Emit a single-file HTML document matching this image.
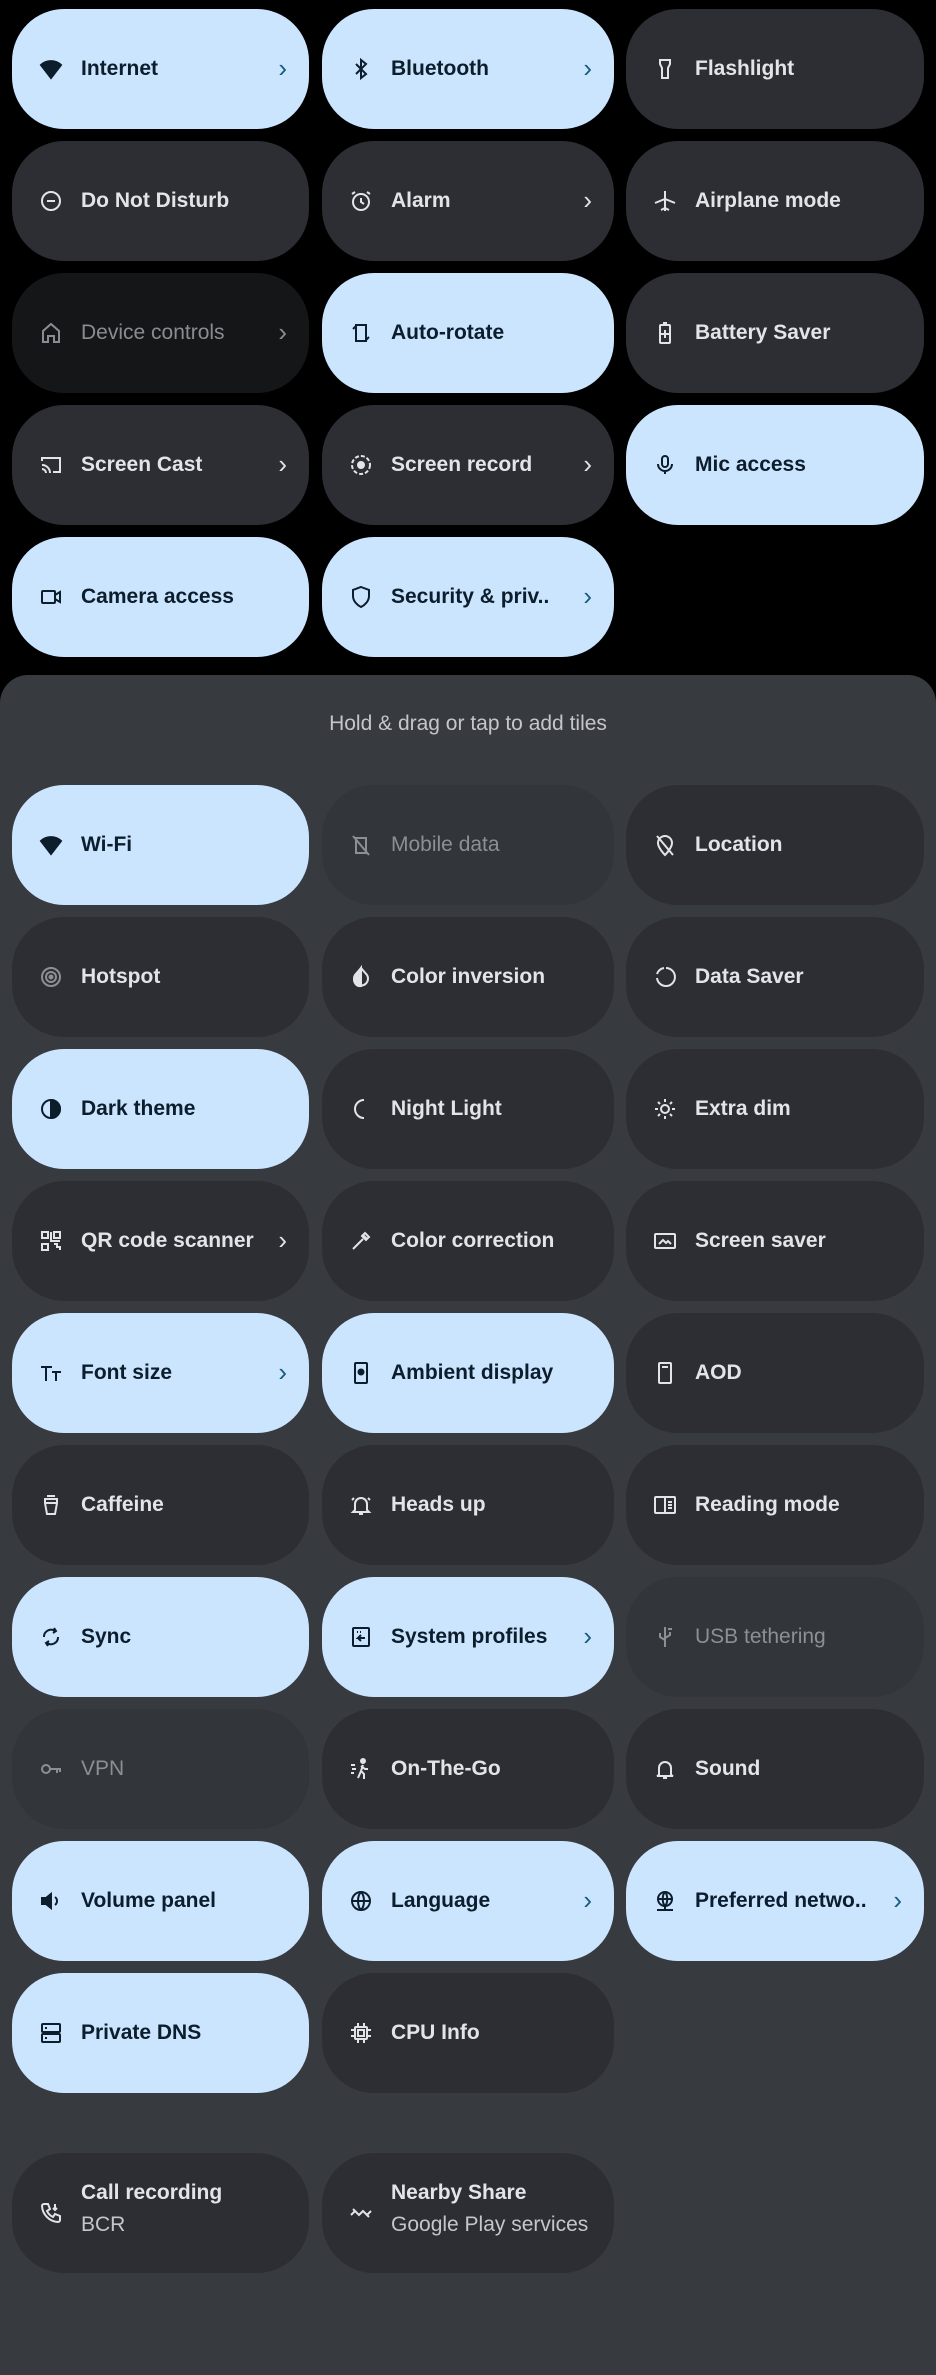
<!DOCTYPE html>
<html><head><meta charset="utf-8"><style>
*{margin:0;padding:0;box-sizing:border-box}
body{width:936px;height:2320px;background:#000;position:relative;overflow:hidden;font-family:"Liberation Sans",sans-serif}
.panel{position:absolute;left:0;top:675px;width:936px;height:1700px;background:#373a3f;border-radius:28px 28px 0 0}
.hint{position:absolute;top:712px;left:0;width:936px;text-align:center;color:#c4c6cb;font-size:21px}
.t{position:absolute;height:120px;border-radius:52px;background:#2c2e33;color:#e4e4e8;font-size:21px;font-weight:bold;display:flex;align-items:center}
.t.on{background:#cce5ff;color:#0c1d2c}
.t.na{background:#323539;color:#8c8f94;font-weight:normal}
.t.dim{background:#151618;color:#8a8c90;font-weight:normal}
.t svg{position:absolute;left:27px;top:48px;width:24px;height:24px;fill:none;stroke:currentColor;stroke-width:2}
.t .l{position:absolute;left:69px;white-space:nowrap}
.t .c{position:absolute;right:22px;top:44px;font-size:26px;font-weight:normal}
.t.on .c{color:#1a5a80}
.c1{left:12px;width:297px}.c2{left:322px;width:292px}.c3{left:626px;width:298px}
.sub{display:block;font-weight:normal;color:#c4c6cb;margin-top:8px}
</style></head><body>
<div class="t on c1" style="top:9px"><svg><path d="M2 8a15 15 0 0 1 20 0L12 21z" fill="currentColor"/></svg><span class="l">Internet</span><span class="c">›</span></div>
<div class="t on c2" style="top:9px"><svg><path d="M7 7l10 10-5 4V3l5 4L7 17"/></svg><span class="l">Bluetooth</span><span class="c">›</span></div>
<div class="t c3" style="top:9px"><svg><path d="M7 3h10v4l-2 4v10H9V11L7 7z"/></svg><span class="l">Flashlight</span></div>

<div class="t c1" style="top:141px"><svg><circle cx="12" cy="12" r="9"/><path d="M8 12h8"/></svg><span class="l">Do Not Disturb</span></div>
<div class="t c2" style="top:141px"><svg><circle cx="12" cy="13" r="8"/><path d="M12 9v4l3 2M3 5l3-2M21 5l-3-2"/></svg><span class="l">Alarm</span><span class="c">›</span></div>
<div class="t c3" style="top:141px"><svg><path d="M12 2v20M2 14l10-4 10 4M8 21l4-2 4 2" /></svg><span class="l">Airplane mode</span></div>

<div class="t dim c1" style="top:273px"><svg><path d="M4 21V10l8-7 8 7v11h-5v-6H9v6z"/></svg><span class="l">Device controls</span><span class="c">›</span></div>
<div class="t on c2" style="top:273px"><svg><rect x="7" y="4" width="10" height="16"/><path d="M4 8l3-3M20 16l-3 3"/></svg><span class="l">Auto-rotate</span></div>
<div class="t c3" style="top:273px"><svg><rect x="7" y="4" width="10" height="18" rx="1"/><path d="M10 2h4M12 9v8M8 13h8"/></svg><span class="l">Battery Saver</span></div>

<div class="t c1" style="top:405px"><svg><path d="M3 8V5h18v14h-7M3 12a8 8 0 0 1 8 8M3 16a4 4 0 0 1 4 4"/></svg><span class="l">Screen Cast</span><span class="c">›</span></div>
<div class="t c2" style="top:405px"><svg><circle cx="12" cy="12" r="9" stroke-dasharray="4 2"/><circle cx="12" cy="12" r="3" fill="currentColor"/></svg><span class="l">Screen record</span><span class="c">›</span></div>
<div class="t on c3" style="top:405px"><svg><rect x="9" y="3" width="6" height="11" rx="3"/><path d="M5 11a7 7 0 0 0 14 0M12 18v3"/></svg><span class="l">Mic access</span></div>

<div class="t on c1" style="top:537px"><svg><rect x="3" y="6" width="13" height="12" rx="1"/><path d="M16 10l5-3v10l-5-3"/></svg><span class="l">Camera access</span></div>
<div class="t on c2" style="top:537px"><svg><path d="M12 2l8 3v6c0 5-4 9-8 11-4-2-8-6-8-11V5z"/></svg><span class="l">Security &amp; priv..</span><span class="c">›</span></div>

<div class="panel"></div>
<div class="hint">Hold &amp; drag or tap to add tiles</div>

<div class="t on c1" style="top:785px"><svg><path d="M2 8a15 15 0 0 1 20 0L12 21z" fill="currentColor"/></svg><span class="l">Wi-Fi</span></div>
<div class="t na c2" style="top:785px"><svg><path d="M7 5h10v15H7zM4 3l16 19"/></svg><span class="l">Mobile data</span></div>
<div class="t c3" style="top:785px"><svg><path d="M12 22s7-7 7-12a7 7 0 0 0-14 0c0 5 7 12 7 12zM4 3l16 19"/></svg><span class="l">Location</span></div>

<div class="t c1" style="top:917px"><svg style="color:#8c8f94"><circle cx="12" cy="12" r="9"/><circle cx="12" cy="12" r="5"/><circle cx="12" cy="12" r="1.5" fill="currentColor"/></svg><span class="l">Hotspot</span></div>
<div class="t c2" style="top:917px"><svg><path d="M12 3l6 7a7 7 0 1 1-12 0z"/><path d="M12 3v18a6 6 0 0 1-6-9z" fill="currentColor"/></svg><span class="l">Color inversion</span></div>
<div class="t c3" style="top:917px"><svg><path d="M13 3a9 9 0 1 1-9 10M11 3a9 9 0 0 0-7 6"/></svg><span class="l">Data Saver</span></div>

<div class="t on c1" style="top:1049px"><svg><circle cx="12" cy="12" r="9"/><path d="M12 3a9 9 0 0 1 0 18z" fill="currentColor"/></svg><span class="l">Dark theme</span></div>
<div class="t c2" style="top:1049px"><svg><path d="M15 3a9 9 0 1 0 0 18 9 9 0 0 1 0-18z"/></svg><span class="l">Night Light</span></div>
<div class="t c3" style="top:1049px"><svg><circle cx="12" cy="12" r="4"/><path d="M12 2v3M12 19v3M2 12h3M19 12h3M5 5l2 2M17 17l2 2M5 19l2-2M17 7l2-2"/></svg><span class="l">Extra dim</span></div>

<div class="t c1" style="top:1181px"><svg><path d="M3 3h6v6H3zM15 3h6v6h-6zM3 15h6v6H3zM15 15h3v3h3v3M12 3v9h9"/></svg><span class="l">QR code scanner</span><span class="c">›</span></div>
<div class="t c2" style="top:1181px"><svg><path d="M4 20l10-10M14 6l4 4M16 4l4 4-3 3-4-4z"/></svg><span class="l">Color correction</span></div>
<div class="t c3" style="top:1181px"><svg><rect x="2" y="5" width="20" height="14" rx="1"/><path d="M6 15l4-4 3 3 2-2 3 3"/></svg><span class="l">Screen saver</span></div>

<div class="t on c1" style="top:1313px"><svg><path d="M2 6h11M7 6v14M13 11h9M17 11v9"/></svg><span class="l">Font size</span><span class="c">›</span></div>
<div class="t on c2" style="top:1313px"><svg><rect x="6" y="2" width="12" height="20" rx="1"/><circle cx="12" cy="11" r="2.5" fill="currentColor"/></svg><span class="l">Ambient display</span></div>
<div class="t c3" style="top:1313px"><svg><rect x="6" y="2" width="12" height="20" rx="1"/><path d="M9 6h6"/></svg><span class="l">AOD</span></div>

<div class="t c1" style="top:1445px"><svg><path d="M6 6h12v4l-2 11H8L6 10zM8 3h8M6 10h12"/></svg><span class="l">Caffeine</span></div>
<div class="t c2" style="top:1445px"><svg><path d="M6 17V11a6 6 0 0 1 12 0v6l2 2H4zM10 21h4M3 7l2-2M21 7l-2-2"/></svg><span class="l">Heads up</span></div>
<div class="t c3" style="top:1445px"><svg><rect x="2" y="4" width="20" height="16" rx="1"/><path d="M12 4v16M15 9h4M15 12h4M15 15h4"/></svg><span class="l">Reading mode</span></div>

<div class="t on c1" style="top:1577px"><svg><path d="M5 12a7 7 0 0 1 11-6M19 12a7 7 0 0 1-11 6M15 3l2 3-3 2M9 21l-2-3 3-2"/></svg><span class="l">Sync</span></div>
<div class="t on c2" style="top:1577px"><svg><rect x="4" y="3" width="16" height="18" rx="1"/><path d="M8 7h1M11 7h1M16 13H9l3-3M9 13l3 3"/></svg><span class="l">System profiles</span><span class="c">›</span></div>
<div class="t na c3" style="top:1577px"><svg><path d="M12 2v20M12 15l-5-3V8M12 13l5-3V7M15 4h4"/></svg><span class="l">USB tethering</span></div>

<div class="t na c1" style="top:1709px"><svg><circle cx="7" cy="12" r="4"/><path d="M11 12h11M18 12v4M21 12v3"/></svg><span class="l">VPN</span></div>
<div class="t c2" style="top:1709px"><svg><circle cx="14" cy="4" r="2" fill="currentColor"/><path d="M14 8l-2 6 3 3v5M12 14l-3 7M12 9l4 3h3M2 8h4M3 12h4M2 16h3"/></svg><span class="l">On-The-Go</span></div>
<div class="t c3" style="top:1709px"><svg><path d="M6 18V11a6 6 0 0 1 12 0v7l2 1H4zM10 21h4"/></svg><span class="l">Sound</span></div>

<div class="t on c1" style="top:1841px"><svg><path d="M3 9h4l5-4v14l-5-4H3z" fill="currentColor"/><path d="M16 8a5 5 0 0 1 0 8"/></svg><span class="l">Volume panel</span></div>
<div class="t on c2" style="top:1841px"><svg><circle cx="12" cy="12" r="9"/><path d="M3 12h18M12 3c-4 4-4 14 0 18M12 3c4 4 4 14 0 18"/></svg><span class="l">Language</span><span class="c">›</span></div>
<div class="t on c3" style="top:1841px"><svg><circle cx="12" cy="10" r="7"/><path d="M5 10h14M12 3c-3 3-3 11 0 14M12 3c3 3 3 11 0 14M12 17v3M4 21h16"/></svg><span class="l">Preferred netwo..</span><span class="c">›</span></div>

<div class="t on c1" style="top:1973px"><svg><rect x="3" y="3" width="18" height="8" rx="1"/><rect x="3" y="13" width="18" height="8" rx="1"/><path d="M6 7h2M6 17h2"/></svg><span class="l">Private DNS</span></div>
<div class="t c2" style="top:1973px"><svg><rect x="6" y="6" width="12" height="12" rx="1"/><rect x="9" y="9" width="6" height="6"/><path d="M9 2v4M15 2v4M9 18v4M15 18v4M2 9h4M2 15h4M18 9h4M18 15h4"/></svg><span class="l">CPU Info</span></div>

<div class="t c1" style="top:2153px"><svg><path d="M5 3h4l2 5-3 2a12 12 0 0 0 6 6l2-3 5 2v4a2 2 0 0 1-2 2A17 17 0 0 1 3 5a2 2 0 0 1 2-2zM16 3v6M14 7l2 2 2-2"/></svg><span class="l" style="top:28px">Call recording<span class="sub">BCR</span></span></div>
<div class="t c2" style="top:2153px"><svg><path d="M2 14l4-4 4 4 4-4 4 4 4-4M4 8l3 3M17 13l3 3"/></svg><span class="l" style="top:28px">Nearby Share<span class="sub">Google Play services</span></span></div>
</body></html>
